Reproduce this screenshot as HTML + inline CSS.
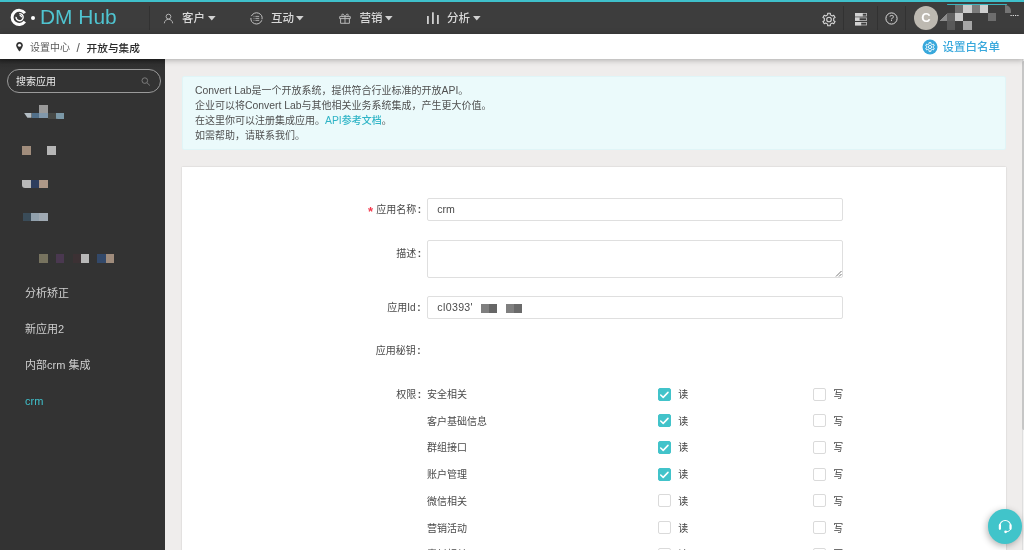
<!DOCTYPE html>
<html lang="zh-CN">
<head>
<meta charset="utf-8">
<title>DM Hub - 开放与集成</title>
<style>
*{box-sizing:border-box;margin:0;padding:0}
html,body{width:1024px;height:550px;overflow:hidden;background:#efedec;}
body{position:relative;will-change:transform;font-family:"Liberation Sans","Noto Sans CJK SC",sans-serif;color:#333;font-size:10px;}
.abs{position:absolute}
#topline{left:0;top:0;width:1024px;height:2px;background:#3fc0cb}
#topbar{left:0;top:0;width:1024px;height:34px;background:#3d3d3d}
#crumbbar{left:0;top:34px;width:1024px;height:25px;background:#fff;box-shadow:0 1px 6px rgba(0,0,0,.3);z-index:3}
#sidebar{left:0;top:59px;width:165px;height:491px;background:#333333}
.brand{left:40px;top:4.300px;font-size:20.900px;line-height:25px;color:#4fc4d0;font-weight:400;white-space:nowrap}
.vdiv{width:1px;background:#323232}
.menu{top:9px;height:18px;line-height:18px;font-size:11.500px;color:#d8d8d8;font-weight:500;white-space:nowrap}
.caret{width:0;height:0;border-left:3.5px solid transparent;border-right:3.5px solid transparent;border-top:4px solid #e8e8e8}
.crumb{top:40.600px;height:14px;line-height:14px;font-size:10px;color:#5a5a5a;white-space:nowrap}
.side-item{left:25px;height:16px;line-height:16px;font-size:11px;color:#d0d0d0;margin-top:0.500px;white-space:nowrap}
.blk{position:absolute}
.en{font-size:10.400px}
.col{margin-left:1.500px;font-weight:700}
#info{left:182px;top:76px;width:824px;height:74px;background:#ebfafb;border:1px solid #e0f5f7;border-radius:2px}
#info p{position:absolute;left:12px;margin-top:-1px;font-size:10px;line-height:15px;height:15px;color:#505050;white-space:nowrap}
#info a{color:#2fb4c6;text-decoration:none;font-weight:500}
#card{left:182px;top:167px;width:824px;height:400px;background:#fff;box-shadow:0 0 1.500px rgba(0,0,0,.18)}
.lbl{width:200px;text-align:right;font-size:10px;line-height:14px;height:14px;color:#4a4a4a;white-space:nowrap}
.inp{left:427px;width:416px;border:1px solid #dfdfdf;background:#fff;border-radius:2px}
.inp span{position:absolute;left:9.300px;top:50%;margin-top:-8px;line-height:14px;font-size:10.600px !important;color:#4a4a4a}
.row{left:427px;margin-top:1px;font-size:10px;line-height:14px;height:14px;color:#4a4a4a;white-space:nowrap}
.cb{width:13px;height:13px;border:1px solid #dadada;border-radius:2px;background:#fff}
.cb.on{background:#42c3ca;border-color:#42c3ca}
.cl{margin-top:1px;margin-left:-0.700px;font-size:10px;line-height:14px;height:14px;color:#444}
</style>
</head>
<body>
<div class="abs" id="topbar"></div>
<div class="abs" id="topline"></div>

<!-- logo -->
<svg class="abs" style="left:0;top:0" width="40" height="34" viewBox="0 0 40 34" fill="none" stroke="#fff">
  <path d="M24.870 13.130A7.100 7.100 0 1 0 24.870 21.670" stroke-width="2.900"/>
  <path d="M19.29 13.66A3.55 3.55 0 1 1 16.06 16.89" stroke-width="1.400"/>
  <path d="M19.600 15.300A1.900 1.900 0 0 1 21.500 17.200" stroke-width="1.200"/>
</svg>
<div class="abs" style="left:31px;top:16px;width:4px;height:4px;border-radius:50%;background:#fff"></div>
<div class="abs brand">DM Hub</div>
<div class="abs vdiv" style="left:149px;top:6px;height:24px"></div>

<!-- menu 1 -->
<svg class="abs" style="left:163px;top:12.500px" width="11" height="11" viewBox="0 0 11 11" fill="none" stroke="#b2b2b2" stroke-width="1">
  <circle cx="5.5" cy="3.6" r="2.4"/><path d="M1.3 10.3c.3-2.6 2-4 4.2-4s3.900 1.400 4.200 4"/>
</svg>
<div class="abs menu" style="left:182px">客户</div>
<svg class="abs" style="left:207.5px;top:15.800px" width="8" height="5" viewBox="0 0 8 5"><path d="M0 0h7.600L3.800 4.600z" fill="#d2d2d2"/></svg>
<!-- menu 2 -->
<svg class="abs" style="left:250px;top:11.500px" width="13" height="13" viewBox="0 0 13 13" fill="none" stroke="#c4c4c4" stroke-width="0.900">
  <circle cx="6.500" cy="6.400" r="5.600" stroke-dasharray="15.600 2" transform="rotate(20 6.500 6.400)"/><path d="M5.400 4.400h3.800M5.400 6.400h3.800M5.400 8.400h3.800M3.600 4.400h.8M3.600 6.400h.8M3.600 8.400h.8" stroke-width="0.800"/>
</svg>
<div class="abs menu" style="left:271px">互动</div>
<svg class="abs" style="left:296.0px;top:15.800px" width="8" height="5" viewBox="0 0 8 5"><path d="M0 0h7.600L3.800 4.600z" fill="#d2d2d2"/></svg>
<!-- menu 3 -->
<svg class="abs" style="left:339px;top:12.500px" width="12" height="11" viewBox="0 0 12 11" fill="none" stroke="#c4c4c4" stroke-width="0.900" stroke-linejoin="round">
  <rect x="0.700" y="3.600" width="10.600" height="2"/><path d="M1.600 5.600v4.700h8.800V5.600M6 3.600v6.700"/><path d="M6 3.400L3.700.8 2.500 2.300 4 3.500M6 3.400L8.300.8 9.500 2.300 8 3.500"/>
</svg>
<div class="abs menu" style="left:359.500px">营销</div>
<svg class="abs" style="left:384.5px;top:15.800px" width="8" height="5" viewBox="0 0 8 5"><path d="M0 0h7.600L3.800 4.600z" fill="#d2d2d2"/></svg>
<!-- menu 4 -->
<svg class="abs" style="left:426px;top:12px" width="14" height="12" viewBox="0 0 14 12">
  <rect x="1" y="4" width="1.800" height="8" fill="#cfcfcf"/><rect x="6" y="0.300" width="1.800" height="11.700" fill="#cfcfcf"/><rect x="11" y="3" width="1.800" height="9" fill="#cfcfcf"/>
</svg>
<div class="abs menu" style="left:447px">分析</div>
<svg class="abs" style="left:472.5px;top:15.800px" width="8" height="5" viewBox="0 0 8 5"><path d="M0 0h7.600L3.800 4.600z" fill="#d2d2d2"/></svg>

<!-- right icons -->
<svg class="abs" style="left:822px;top:11.700px" width="14" height="15" viewBox="0 0 14 15" fill="none" stroke="#d6d6d6" stroke-width="1.100" stroke-linejoin="round">
  <path d="M8.33 1.24L5.67 1.24L5.68 2.89L3.67 4.05L2.24 3.22L0.91 5.52L2.34 6.34L2.34 8.66L0.91 9.48L2.24 11.78L3.67 10.95L5.68 12.11L5.67 13.76L8.33 13.76L8.32 12.11L10.33 10.95L11.76 11.78L13.09 9.48L11.66 8.66L11.66 6.34L13.09 5.52L11.76 3.22L10.33 4.05L8.32 2.89z"/>
  <circle cx="7" cy="7.500" r="2.300"/>
</svg>
<div class="abs vdiv" style="left:843px;top:6px;height:24px"></div>
<svg class="abs" style="left:855px;top:13px" width="12" height="13" viewBox="0 0 12 13">
  <g fill="none" stroke="#bdbdbd" stroke-width="0.800"><rect x="0.400" y="0.400" width="11.200" height="2.600"/><rect x="0.400" y="4.900" width="11.200" height="2.600"/><rect x="0.400" y="9.400" width="11.200" height="2.600"/></g>
  <rect x="0" y="0" width="7.800" height="3.400" fill="#d2d2d2"/><rect x="0" y="4.500" width="4.600" height="3.400" fill="#d2d2d2"/><rect x="0" y="9" width="6.200" height="3.400" fill="#d2d2d2"/>
</svg>
<div class="abs vdiv" style="left:877px;top:6px;height:24px"></div>
<svg class="abs" style="left:885px;top:12px" width="13" height="13" viewBox="0 0 13 13" fill="none" stroke="#dcdcdc" stroke-width="1">
  <circle cx="6.500" cy="6.500" r="5.600"/>
</svg>
<div class="abs" style="left:885px;top:12px;width:13px;height:13px;line-height:13px;text-align:center;font-size:8.500px;color:#dcdcdc">?</div>
<div class="abs vdiv" style="left:905px;top:6px;height:24px"></div>
<div class="abs" style="left:914px;top:5.500px;width:24px;height:24px;border-radius:50%;background:#bdb9b1;color:#fff;font-weight:700;font-size:13px;line-height:24px;text-align:center">C</div>
<!-- blurred user name -->
<div class="abs" style="left:947px;top:4px;width:60px;height:1px;background:#3bb4be;border-radius:1px"></div>
<div id="mos1">
<div class="blk" style="left:954.800px;top:5.0px;width:8.300px;height:8px;background:#6f6f6f"></div>
<div class="blk" style="left:963px;top:5.0px;width:8.500px;height:8px;background:#cbcbcb"></div>
<div class="blk" style="left:971.500px;top:5.0px;width:8.300px;height:8px;background:#7b7b7b"></div>
<div class="blk" style="left:979.800px;top:5.0px;width:8.500px;height:8px;background:#cfcfcf"></div>
<div class="blk" style="left:1004.500px;top:5.0px;width:6.500px;height:8px;background:#747474;border-top-right-radius:6px"></div>
<div class="blk" style="left:939.500px;top:13.0px;width:7.500px;height:8px;background:linear-gradient(135deg,#3d3d3d 50%,#8c8c8c 50%)"></div>
<div class="blk" style="left:946.600px;top:13.0px;width:8.300px;height:8px;background:#626262"></div>
<div class="blk" style="left:954.800px;top:13.0px;width:8.300px;height:8px;background:#c9c9c9"></div>
<div class="blk" style="left:988.300px;top:13.0px;width:8px;height:8px;background:#6d6d6d"></div>
<div class="blk" style="left:946.600px;top:21.0px;width:8.300px;height:8.500px;background:#595959"></div>
<div class="blk" style="left:963px;top:21.0px;width:8.500px;height:8.500px;background:#a6a6a6"></div>
</div>
<div class="abs" style="left:1010px;top:10.300px;font-size:8px;line-height:8px;color:#e8e8e8;letter-spacing:0;font-weight:700">....</div>

<!-- breadcrumb bar -->
<div class="abs" id="crumbbar"></div>
<svg class="abs" style="left:16px;top:41.700px;z-index:4" width="7" height="10" viewBox="0 0 7 10">
  <path d="M3.500 0C1.500 0 .2 1.500.2 3.300.2 5.500 3.500 9.600 3.500 9.600S6.800 5.500 6.800 3.300C6.800 1.500 5.500 0 3.500 0z" fill="#333"/><circle cx="3.500" cy="3.300" r="1.550" fill="#fff"/>
</svg>
<div class="abs crumb" style="left:30px;z-index:4">设置中心</div>
<div class="abs crumb" style="left:76.500px;z-index:4;font-size:12px;color:#555">/</div>
<div class="abs crumb" style="left:86.500px;z-index:4;font-weight:500;font-size:10.700px;color:#2b2b2b">开放与集成</div>
<svg class="abs" style="left:922px;top:39px;z-index:4" width="16" height="16" viewBox="0 0 16 16">
  <circle cx="8" cy="8" r="7.500" fill="#38a8dc"/>
  <g fill="none" stroke="#fff" stroke-width="0.900" stroke-linejoin="round"><path d="M8.94 3.60L7.06 3.60L7.09 4.83L5.71 5.63L4.66 4.99L3.72 6.61L4.80 7.20L4.80 8.80L3.72 9.39L4.66 11.01L5.71 10.37L7.09 11.17L7.06 12.40L8.94 12.40L8.91 11.17L10.29 10.37L11.34 11.01L12.28 9.39L11.20 8.80L11.20 7.20L12.28 6.61L11.34 4.99L10.29 5.63L8.91 4.83z"/><circle cx="8" cy="8" r="1.600"/></g>
</svg>
<div class="abs" style="left:942.500px;top:39px;height:16px;line-height:16px;font-size:11.500px;color:#38a8dc;font-weight:500;z-index:4;white-space:nowrap">设置白名单</div>

<!-- sidebar -->
<div class="abs" id="sidebar"></div>
<div class="abs" style="left:0;top:59px;width:165px;height:11px;background:linear-gradient(rgba(20,20,20,.5),rgba(40,40,40,.2) 50%,rgba(51,51,51,0))"></div>
<div class="abs" style="left:7px;top:69px;width:154px;height:24px;border:1px solid #9b9b9b;border-radius:12px"></div>
<div class="abs" style="left:16px;top:75.200px;height:14px;line-height:14px;font-size:10px;color:#ececec;white-space:nowrap">搜索应用</div>
<svg class="abs" style="left:141px;top:76.500px" width="10" height="9" viewBox="0 0 10 9" fill="none" stroke="#7c7c7c" stroke-width="1">
  <circle cx="3.800" cy="3.600" r="2.800"/><path d="M5.900 5.700l3 2.800"/>
</svg>
<div id="mos2">
<div class="blk" style="left:39px;top:104.800px;width:8.500px;height:9px;background:#9a9a9a"></div>
<div class="blk" style="left:24px;top:112.800px;width:7.500px;height:5px;background:#b4bec5;clip-path:polygon(0 0,100% 0,100% 100%,45% 100%)"></div>
<div class="blk" style="left:31.500px;top:112.800px;width:7.500px;height:5.200px;background:#52708a"></div>
<div class="blk" style="left:39px;top:112.800px;width:8.500px;height:5.500px;background:#8198ab"></div>
<div class="blk" style="left:47.500px;top:112.800px;width:8px;height:5.800px;background:#474946"></div>
<div class="blk" style="left:55.500px;top:112.800px;width:8.500px;height:6.700px;background:#7b98a7;clip-path:polygon(0 0,100% 0,100% 100%,0 90%)"></div>

<div class="blk" style="left:22px;top:146.300px;width:8.900px;height:8.700px;background:#a18d7c"></div>
<div class="blk" style="left:47.300px;top:146.300px;width:8.500px;height:8.700px;background:#b6b6b6"></div>

<div class="blk" style="left:22px;top:179.500px;width:8.900px;height:8.500px;background:#b8b8b8;border-bottom-left-radius:3px"></div>
<div class="blk" style="left:30.900px;top:179.500px;width:8.100px;height:8.500px;background:#2e3e5e"></div>
<div class="blk" style="left:39px;top:179.500px;width:8.600px;height:8.500px;background:#ae9887"></div>

<div class="blk" style="left:22.800px;top:213.200px;width:8.100px;height:8.300px;background:#3a4c59"></div>
<div class="blk" style="left:30.900px;top:213.200px;width:8.100px;height:8.300px;background:#91a0ac"></div>
<div class="blk" style="left:39px;top:213.200px;width:8.600px;height:8.300px;background:#a0aab3"></div>

<div class="blk" style="left:38.700px;top:254.400px;width:9px;height:8.600px;background:#77735f"></div>
<div class="blk" style="left:55.800px;top:254.400px;width:8.300px;height:8.600px;background:#4a3850"></div>
<div class="blk" style="left:72.500px;top:254.400px;width:8px;height:8.600px;background:#3c3134"></div>
<div class="blk" style="left:80.500px;top:254.400px;width:8.500px;height:8.600px;background:#b8b8b8"></div>
<div class="blk" style="left:97.400px;top:254.400px;width:8.300px;height:8.600px;background:#33496a"></div>
<div class="blk" style="left:105.700px;top:254.400px;width:8.300px;height:8.600px;background:#a08c7c"></div>
</div>
<div class="abs side-item" style="top:284px">分析矫正</div>
<div class="abs side-item" style="top:320px">新应用2</div>
<div class="abs side-item" style="top:356px">内部crm 集成</div>
<div class="abs side-item" style="top:392px;color:#3fc0cb">crm</div>

<!-- info -->
<div class="abs" id="info">
  <p style="top:6.500px"><span class="en">Convert Lab</span>是一个开放系统，提供符合行业标准的开放<span class="en">API</span>。</p>
  <p style="top:21.700px">企业可以将<span class="en">Convert Lab</span>与其他相关业务系统集成，产生更大价值。</p>
  <p style="top:36.900px">在这里你可以注册集成应用。<a><span class="en">API</span>参考文档</a>。</p>
  <p style="top:52.100px">如需帮助，请联系我们。</p>
</div>

<!-- card -->
<div class="abs" id="card"></div>
<div class="abs lbl" style="left:221px;top:203.0px"><span style="color:#f43a4e;font-size:13px;line-height:10px;position:relative;top:2.800px;margin-right:3px;font-weight:700">*</span>应用名称<span class="col">:</span></div>
<div class="abs inp" style="top:198px;height:23px"><span class="en">crm</span></div>
<div class="abs lbl" style="left:221px;top:246.5px">描述<span class="col">:</span></div>
<div class="abs inp" style="top:240px;height:38px"></div>
<svg class="abs" style="left:835px;top:270px" width="7" height="7" viewBox="0 0 7 7" stroke="#555" stroke-width="0.800"><path d="M6.500 1L1 6.500M6.500 4L4 6.500"/></svg>
<div class="abs lbl" style="left:220.500px;top:301.400px">应用Id<span class="col">:</span></div>
<div class="abs inp" style="top:296px;height:23px"><span class="en" style="letter-spacing:0.350px">cl0393'</span></div>
<div class="blk" style="left:480.600px;top:304px;width:8.400px;height:8.500px;background:#7f7f7f"></div>
<div class="blk" style="left:489px;top:304px;width:8px;height:8.500px;background:#666"></div>
<div class="blk" style="left:505.500px;top:304px;width:8.500px;height:8.500px;background:#7f7f7f"></div>
<div class="blk" style="left:514px;top:304px;width:8px;height:8.500px;background:#6a6a6a"></div>
<div class="abs lbl" style="left:220.500px;top:344.400px">应用秘钥<span class="col">:</span></div>

<div class="abs lbl" style="left:221px;top:388.0px">权限<span class="col">:</span></div>

<div class="abs row" style="top:387px">安全相关</div>
<div class="abs cb on" style="left:658px;top:387.500px"><svg style="position:absolute;left:-1px;top:-1px" width="13" height="13" viewBox="0 0 13 13"><path d="M2.700 7l2.500 2.400 4.800-5" fill="none" stroke="#fff" stroke-width="1.550" stroke-linecap="round" stroke-linejoin="round"/></svg></div><div class="abs cl" style="left:679px;top:387px">读</div>
<div class="abs cb" style="left:813px;top:387.500px"></div><div class="abs cl" style="left:834px;top:387px">写</div>

<div class="abs row" style="top:413.700px">客户基础信息</div>
<div class="abs cb on" style="left:658px;top:414.200px"><svg style="position:absolute;left:-1px;top:-1px" width="13" height="13" viewBox="0 0 13 13"><path d="M2.700 7l2.500 2.400 4.800-5" fill="none" stroke="#fff" stroke-width="1.550" stroke-linecap="round" stroke-linejoin="round"/></svg></div><div class="abs cl" style="left:679px;top:413.700px">读</div>
<div class="abs cb" style="left:813px;top:414.200px"></div><div class="abs cl" style="left:834px;top:413.700px">写</div>

<div class="abs row" style="top:440.400px">群组接口</div>
<div class="abs cb on" style="left:658px;top:440.900px"><svg style="position:absolute;left:-1px;top:-1px" width="13" height="13" viewBox="0 0 13 13"><path d="M2.700 7l2.500 2.400 4.800-5" fill="none" stroke="#fff" stroke-width="1.550" stroke-linecap="round" stroke-linejoin="round"/></svg></div><div class="abs cl" style="left:679px;top:440.400px">读</div>
<div class="abs cb" style="left:813px;top:440.900px"></div><div class="abs cl" style="left:834px;top:440.400px">写</div>

<div class="abs row" style="top:467.100px">账户管理</div>
<div class="abs cb on" style="left:658px;top:467.600px"><svg style="position:absolute;left:-1px;top:-1px" width="13" height="13" viewBox="0 0 13 13"><path d="M2.700 7l2.500 2.400 4.800-5" fill="none" stroke="#fff" stroke-width="1.550" stroke-linecap="round" stroke-linejoin="round"/></svg></div><div class="abs cl" style="left:679px;top:467.100px">读</div>
<div class="abs cb" style="left:813px;top:467.600px"></div><div class="abs cl" style="left:834px;top:467.100px">写</div>

<div class="abs row" style="top:493.800px">微信相关</div>
<div class="abs cb" style="left:658px;top:494.300px"></div><div class="abs cl" style="left:679px;top:493.800px">读</div>
<div class="abs cb" style="left:813px;top:494.300px"></div><div class="abs cl" style="left:834px;top:493.800px">写</div>

<div class="abs row" style="top:520.500px">营销活动</div>
<div class="abs cb" style="left:658px;top:521px"></div><div class="abs cl" style="left:679px;top:520.500px">读</div>
<div class="abs cb" style="left:813px;top:521px"></div><div class="abs cl" style="left:834px;top:520.500px">写</div>

<div class="abs row" style="top:547.200px">素材相关</div>
<div class="abs cb" style="left:658px;top:547.700px"></div><div class="abs cl" style="left:679px;top:547.200px">读</div>
<div class="abs cb" style="left:813px;top:547.700px"></div><div class="abs cl" style="left:834px;top:547.200px">写</div>

<!-- scrollbar thumb -->
<div class="abs" style="left:1021.500px;top:59px;width:2.500px;height:491px;background:#f3f3f3;border-left:0.500px solid #dedede"></div>
<div class="abs" style="left:1021.500px;top:61px;width:3px;height:368.500px;background:#c6c6c6;border-radius:2px 0 0 2px"></div>

<!-- floating help -->
<div class="abs" style="left:987.500px;top:509.200px;width:34.800px;height:34.800px;border-radius:50%;background:#41c4ca;box-shadow:-1px 2px 7px rgba(0,0,0,.3)"></div>
<svg class="abs" style="left:996px;top:518px" width="18" height="18" viewBox="0 0 18 18" fill="none" stroke="#fff" stroke-linecap="round">
  <path d="M3.700 9.500V8a5.500 5.500 0 0 1 11 0v1.500" stroke-width="1.200"/>
  <path d="M14.700 10.500c0 1.800-1.800 3.200-4.500 3.300" stroke-width="1"/>
  <circle cx="9.600" cy="13.800" r="1.350" fill="#fff" stroke="none"/>
  <path d="M3.900 7.200v3.600M14.500 7.200v3.600" stroke-width="2.200"/>
</svg>
</body>
</html>
